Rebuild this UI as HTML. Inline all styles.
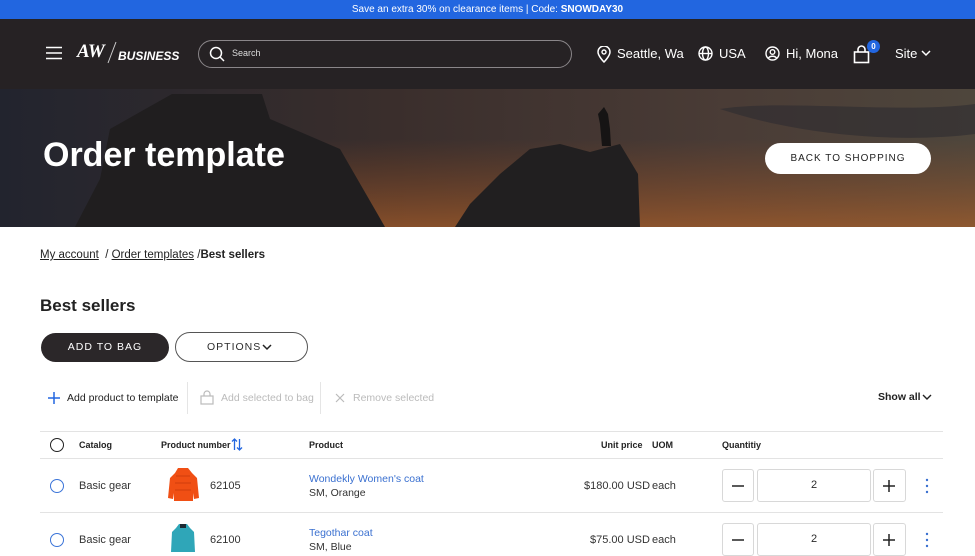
<!DOCTYPE html>
<html><head><meta charset="utf-8"><style>
*{box-sizing:border-box;margin:0;padding:0}
body{width:975px;height:548px;overflow:hidden;font-family:"Liberation Sans",sans-serif;background:#fff;color:#2b2b2b;position:relative}
.abs{position:absolute}
.banner{left:0;top:0;width:975px;height:19px;background:#2266e0;color:#fff;font-size:10px;text-align:center;line-height:19px}
.hdr{left:0;top:19px;width:975px;height:70px;background:#262224;color:#fff}
.hero{left:0;top:89px;width:975px;height:138px;overflow:hidden}
.t{font-size:13px;color:#fff}
.lnk{text-decoration:underline}
.th{font-size:9px;font-weight:bold;color:#222}
.td{font-size:11px;color:#333}
.line{left:40px;width:903px;height:1px;background:#e3e3e3}
.qb{border:1px solid #d8d8d8;border-radius:3px;background:#fff;height:33px}
</style></head><body>
<div class="abs banner">Save an extra 30% on clearance items | Code: <b>SNOWDAY30</b></div>
<div class="abs hdr">
  <svg class="abs" style="left:46px;top:27px" width="16" height="14"><path d="M0 1.5h16M0 7h16M0 12.5h16" stroke="#fff" stroke-width="1.6"/></svg>
  <div class="abs" style="left:77px;top:22px;font:italic bold 19px 'Liberation Serif',serif">AW</div>
  <svg class="abs" style="left:106px;top:22px" width="12" height="24"><path d="M10 1L2 22" stroke="#ccc" stroke-width="1"/></svg>
  <div class="abs" style="left:118px;top:30px;font:italic bold 12px 'Liberation Sans',sans-serif">BUSINESS</div>
  <div class="abs" style="left:198px;top:21px;width:374px;height:28px;border:1px solid #8a8689;border-radius:14px"></div>
  <svg class="abs" style="left:209px;top:27px" width="16" height="16"><circle cx="7" cy="7" r="5.5" stroke="#fff" stroke-width="1.5" fill="none"/><path d="M11 11l4 4" stroke="#fff" stroke-width="1.5"/></svg>
  <div class="abs" style="left:232px;top:29px;font-size:9px;color:#ddd">Search</div>
  <svg class="abs" style="left:597px;top:27px" width="14" height="17"><path d="M7 16s-6-6-6-10a6 6 0 0112 0c0 4-6 10-6 10z" stroke="#fff" stroke-width="1.5" fill="none"/><circle cx="7" cy="6" r="2" stroke="#fff" stroke-width="1.4" fill="none"/></svg>
  <div class="abs t" style="left:617px;top:27px">Seattle, Wa</div>
  <svg class="abs" style="left:698px;top:27px" width="15" height="15"><g stroke="#fff" stroke-width="1.4" fill="none"><circle cx="7.5" cy="7.5" r="6.5"/><ellipse cx="7.5" cy="7.5" rx="3" ry="6.5"/><path d="M1 7.5h13"/></g></svg>
  <div class="abs t" style="left:719px;top:27px">USA</div>
  <svg class="abs" style="left:765px;top:27px" width="15" height="15"><g stroke="#fff" stroke-width="1.4" fill="none"><circle cx="7.5" cy="7.5" r="6.5"/><circle cx="7.5" cy="6" r="2.3"/><path d="M3 12.5c2-3 7-3 9 0"/></g></svg>
  <div class="abs t" style="left:786px;top:27px">Hi, Mona</div>
  <svg class="abs" style="left:853px;top:26px" width="18" height="19"><g stroke="#fff" stroke-width="1.6" fill="none"><rect x="1.5" y="7" width="14" height="10.5"/><path d="M5 7V4.5a3.5 3.5 0 017 0V7"/></g></svg>
  <div class="abs" style="left:867px;top:21px;width:13px;height:13px;border-radius:50%;background:#2266e0;font-size:8px;font-weight:bold;text-align:center;line-height:13px">0</div>
  <div class="abs t" style="left:895px;top:27px">Site</div>
  <svg class="abs" style="left:921px;top:31px" width="10" height="7"><path d="M1 1l4 4 4-4" stroke="#fff" stroke-width="1.5" fill="none"/></svg>
</div>
<div class="abs hero">
<svg width="975" height="138" style="position:absolute;left:0;top:0">
<defs>
<linearGradient id="sky" x1="0" y1="0" x2="1" y2="0"><stop offset="0" stop-color="#22242e"/><stop offset=".4" stop-color="#3a2e2c"/><stop offset=".75" stop-color="#4a3c36"/><stop offset="1" stop-color="#4e463c"/></linearGradient>
<linearGradient id="glow" x1="0" y1="0" x2="0" y2="1"><stop offset="0" stop-color="#a05020" stop-opacity="0"/><stop offset="1" stop-color="#b86428" stop-opacity=".6"/></linearGradient>
</defs>
<rect width="975" height="138" fill="url(#sky)"/>
<rect x="250" y="50" width="725" height="88" fill="url(#glow)"/>
<path d="M720 20c60-10 180 5 255-5v30c-80 10-180 0-255-25z" fill="#2d2b30" opacity=".6"/>
<path d="M75 138L100 90L110 40L172 5L262 5L270 30L340 60L385 138Z" fill="#201e1f"/>
<path d="M455 138L470 115L500 85L530 60L560 55L590 63L620 55L638 85L640 138Z" fill="#211f20"/>
<path d="M602 57L600 35L598 25L604 18L608 25L610 40L611 57Z" fill="#161414"/>
</svg>
<div class="abs" style="left:43px;top:47px;font-size:34px;font-weight:bold;color:#fff">Order template</div>
<div class="abs" style="left:765px;top:54px;width:166px;height:31px;background:#fff;border-radius:16px;font-size:10px;letter-spacing:1px;text-align:center;line-height:31px;color:#222">BACK TO SHOPPING</div>
</div>
<div class="abs" style="left:40px;top:249px;font-size:11.5px;color:#222"><span class="lnk">My account</span> &nbsp;/ <span class="lnk">Order templates</span> /<b>Best sellers</b></div>
<div class="abs" style="left:40px;top:296px;font-size:17px;font-weight:bold;color:#222">Best sellers</div>
<div class="abs" style="left:41px;top:333px;width:128px;height:29px;background:#2b2729;border-radius:15px;color:#fff;font-size:10.5px;letter-spacing:1px;text-align:center;line-height:29px">ADD TO BAG</div>
<div class="abs" style="left:175px;top:332px;width:133px;height:30px;border:1px solid #555;border-radius:15px;font-size:10.5px;letter-spacing:1px;line-height:28px;padding-left:31px">OPTIONS</div>
<svg class="abs" style="left:262px;top:344px" width="10" height="7"><path d="M1 1l4 4 4-4" stroke="#222" stroke-width="1.5" fill="none"/></svg>
<svg class="abs" style="left:48px;top:392px" width="12" height="12"><path d="M6 0v12M0 6h12" stroke="#2266e0" stroke-width="1.5"/></svg>
<div class="abs td" style="left:67px;top:392px;font-size:10.5px;color:#222">Add product to template</div>
<div class="abs" style="left:187px;top:382px;width:1px;height:32px;background:#e5e5e5"></div>
<svg class="abs" style="left:200px;top:390px" width="14" height="15"><g stroke="#bbb" stroke-width="1.2" fill="none"><rect x="1" y="6" width="12" height="8"/><path d="M4 6V4a3 3 0 016 0v2"/></g></svg>
<div class="abs" style="left:221px;top:392px;font-size:10.5px;color:#bbb">Add selected to bag</div>
<div class="abs" style="left:320px;top:382px;width:1px;height:32px;background:#e5e5e5"></div>
<svg class="abs" style="left:335px;top:393px" width="10" height="10"><path d="M1 1l8 8M9 1l-8 8" stroke="#bbb" stroke-width="1.2"/></svg>
<div class="abs" style="left:353px;top:392px;font-size:10.5px;color:#bbb">Remove selected</div>
<div class="abs" style="left:878px;top:391px;font-size:10.5px;font-weight:bold;color:#222">Show all</div>
<svg class="abs" style="left:922px;top:394px" width="10" height="7"><path d="M1 1l4 4 4-4" stroke="#222" stroke-width="1.4" fill="none"/></svg>
<div class="abs line" style="top:431px"></div>
<div class="abs line" style="top:458px"></div>
<div class="abs line" style="top:512px"></div>
<div class="abs" style="left:50px;top:438px;width:14px;height:14px;border:1.5px solid #222;border-radius:50%"></div>
<div class="abs th" style="left:79px;top:440px">Catalog</div>
<div class="abs th" style="left:161px;top:440px">Product number</div>
<svg class="abs" style="left:231px;top:438px" width="12" height="13"><g stroke="#2266e0" stroke-width="1.3" fill="none"><path d="M3.5 12V1M1 3.5l2.5-2.5 2.5 2.5M8.5 1v11M6 9.5l2.5 2.5 2.5-2.5"/></g></svg>
<div class="abs th" style="left:309px;top:440px">Product</div>
<div class="abs th" style="left:601px;top:440px">Unit price</div>
<div class="abs th" style="left:652px;top:440px">UOM</div>
<div class="abs th" style="left:722px;top:440px">Quantitiy</div>
<div class="abs" style="left:50px;top:479px;width:14px;height:14px;border:1.5px solid #3b74d8;border-radius:50%"></div>
<div class="abs td" style="left:79px;top:480px">Basic gear</div>
<svg class="abs" style="left:166px;top:466px" width="34" height="37"><path d="M12 2h10l4 5 5 5 2 20-5 1-1-6v8H8v-8l-1 6-5-1 2-20 5-5z" fill="#f04f14"/><path d="M10 10h14M9 17h16M9 24h16" stroke="#c43a0a" stroke-width=".8"/></svg>
<div class="abs td" style="left:210px;top:480px">62105</div>
<div class="abs td" style="left:309px;top:473px;font-size:10.5px;color:#3a70d0">Wondekly Women's coat</div>
<div class="abs td" style="left:309px;top:487px;font-size:10.5px">SM, Orange</div>
<div class="abs td" style="left:584px;top:480px">$180.00 USD</div>
<div class="abs td" style="left:652px;top:480px">each</div>
<div class="abs qb" style="left:722px;top:469px;width:32px"></div>
<div class="abs qb" style="left:757px;top:469px;width:114px;text-align:center;line-height:31px;font-size:11px">2</div>
<div class="abs qb" style="left:873px;top:469px;width:33px"></div>
<svg class="abs" style="left:732px;top:485px" width="12" height="2"><path d="M0 1h12" stroke="#222" stroke-width="1.5"/></svg>
<svg class="abs" style="left:883px;top:480px" width="12" height="12"><path d="M6 0v12M0 6h12" stroke="#222" stroke-width="1.5"/></svg>
<svg class="abs" style="left:925px;top:478px" width="4" height="16"><g fill="#3a70d0"><circle cx="2" cy="2" r="1.2"/><circle cx="2" cy="8" r="1.2"/><circle cx="2" cy="14" r="1.2"/></g></svg>
<div class="abs" style="left:50px;top:533px;width:14px;height:14px;border:1.5px solid #3b74d8;border-radius:50%"></div>
<div class="abs td" style="left:79px;top:534px">Basic gear</div>
<svg class="abs" style="left:170px;top:522px" width="26" height="30"><path d="M9 2h8l3 4 4 4 1 20H1l1-20 4-4z" fill="#2fa6b8"/><rect x="10" y="2" width="6" height="4" fill="#1d2a33"/></svg>
<div class="abs td" style="left:210px;top:534px">62100</div>
<div class="abs td" style="left:309px;top:527px;font-size:10.5px;color:#3a70d0">Tegothar coat</div>
<div class="abs td" style="left:309px;top:541px;font-size:10.5px">SM, Blue</div>
<div class="abs td" style="left:590px;top:534px">$75.00 USD</div>
<div class="abs td" style="left:652px;top:534px">each</div>
<div class="abs qb" style="left:722px;top:523px;width:32px"></div>
<div class="abs qb" style="left:757px;top:523px;width:114px;text-align:center;line-height:31px;font-size:11px">2</div>
<div class="abs qb" style="left:873px;top:523px;width:33px"></div>
<svg class="abs" style="left:732px;top:539px" width="12" height="2"><path d="M0 1h12" stroke="#222" stroke-width="1.5"/></svg>
<svg class="abs" style="left:883px;top:534px" width="12" height="12"><path d="M6 0v12M0 6h12" stroke="#222" stroke-width="1.5"/></svg>
<svg class="abs" style="left:925px;top:532px" width="4" height="16"><g fill="#3a70d0"><circle cx="2" cy="2" r="1.2"/><circle cx="2" cy="8" r="1.2"/><circle cx="2" cy="14" r="1.2"/></g></svg>
</body></html>
